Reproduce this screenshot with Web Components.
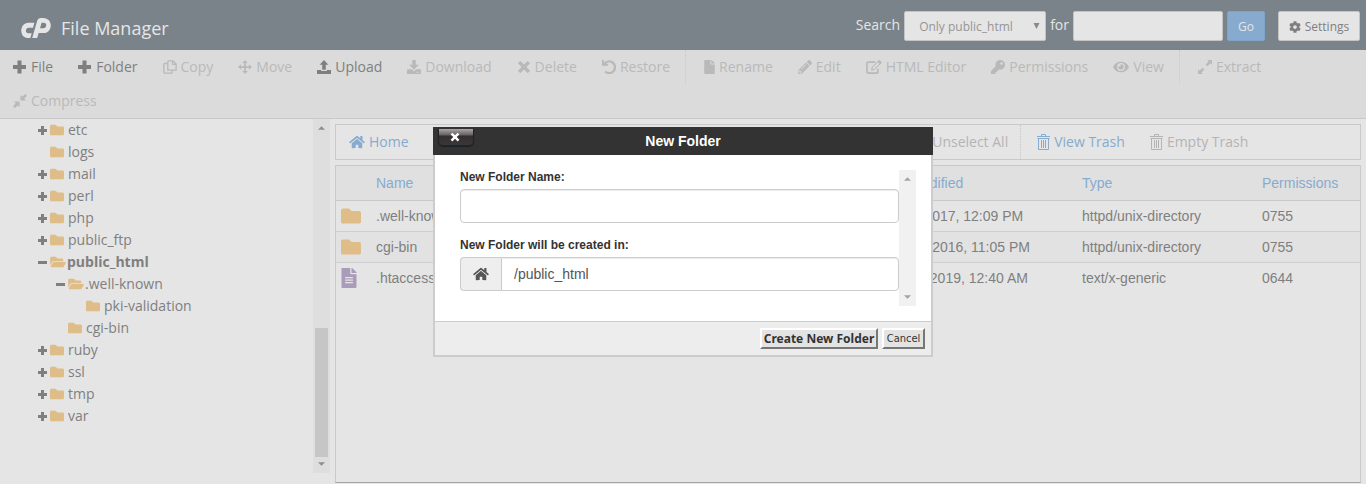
<!DOCTYPE html>
<html lang="en">
<head>
<meta charset="utf-8">
<meta name="viewport" content="width=device-width, initial-scale=1">
<title>File Manager</title>
<style>
  :root {
    --page: #e5e5e5;
    --header: #7b838a;
    --bar: #dbdbdb;
    --line: #c9c9c9;
    --text: #7f7f7f;
    --muted: #b9b9b9;
    --link: #87abcd;
    --folder: #dfbd88;
    --ui: "Open Sans", "Noto Sans", sans-serif;
    --arial: "Liberation Sans", Arial, sans-serif;
  }
  html, body { margin: 0; }
  body { background: var(--page); color: var(--text); font: 14px/20px var(--ui); }
</style>
</head>
<body>
<fm-app></fm-app>

<script>
const ICONS = {
  plus: ['0 0 14 14', '<path d="M4.500 0.500h4V5h4.500v4H8.500v4.500h-4V9H0V5h4.500z"/>'],
  copy: ['0 0 16 16', '<path fill="none" stroke="currentColor" stroke-width="1.500" d="M7.500 1h4L15 4.500V11.500H5.500V2a1 1 0 0 1 1-1zM11 1v4h4M4.500 4H2a1 1 0 0 0-1 1v9a1 1 0 0 0 1 1h7.500a1 1 0 0 0 1-1v-2"/>'],
  move: ['0 0 16 16', '<path d="M8 0l3.200 3.500H9v3.500h3.500V4.800L16 8l-3.500 3.200V9H9v3.500h2.200L8 16l-3.200-3.500H7V9H3.500v2.200L0 8l3.500-3.200V7H7V3.500H4.800z"/>'],
  upload: ['0 0 16 16', '<path d="M8 0l5 5.500H10V11H6V5.500H3zM0 11.500h4.800v1h6.400v-1H16V16H0z"/>'],
  download: ['0 0 16 16', '<path fill-rule="evenodd" d="M6 0h4v5.500h3.500L8 11 2.500 5.500H6zM1 10.500h4.500L8 13l2.500-2.500H15q1 0 1 1V15q0 1-1 1H1q-1 0-1-1v-3.500q0-1 1-1zm9.500 3v1h1.200v-1zm2.300 0v1H14v-1z"/>'],
  times: ['0 0 16 16', '<path d="M3.800 1L8 5.200 12.200 1 15 3.800 10.800 8l4.200 4.200-2.800 2.800L8 10.800 3.800 15 1 12.200 5.200 8 1 3.800z"/>'],
  undo: ['0 0 16 16', '<path d="M0 0h2.200v3A8 8 0 1 1 2.600 14l1.600-1.700A5.500 5.500 0 1 0 4.200 4.400H7v2.200H0z"/>'],
  file: ['0 0 384 512', '<path d="M224 136V0H24C10.700 0 0 10.700 0 24v464c0 13.300 10.700 24 24 24h336c13.300 0 24-10.700 24-24V160H248c-13.200 0-24-10.800-24-24zm160-14.100v6.100H256V0h6.100c6.400 0 12.500 2.500 17 7l97.900 98c4.500 4.500 7 10.600 7 16.900z"/>'],
  fileText: ['0 0 384 512', '<path d="M224 136V0H24C10.700 0 0 10.700 0 24v464c0 13.300 10.700 24 24 24h336c13.300 0 24-10.700 24-24V160H248c-13.200 0-24-10.800-24-24zm160-14.100v6.100H256V0h6.100c6.400 0 12.500 2.500 17 7l97.900 98c4.500 4.500 7 10.600 7 16.900z"/><path fill="#e5e5e5" d="M92 230h200v34H92zM92 294h200v34H92zM92 358h200v34H92z"/>'],
  pencil: ['0 0 512 512', '<path d="M497.900 142.100l-46.100 46.100c-4.700 4.700-12.300 4.700-17 0l-111-111c-4.700-4.700-4.700-12.300 0-17l46.100-46.100c18.700-18.700 49.100-18.700 67.900 0l60.100 60.100c18.800 18.700 18.800 49.100 0 67.900zM284.200 99.800L21.600 362.400.4 483.900c-2.900 16.400 11.400 30.600 27.800 27.800l121.500-21.300 262.600-262.600c4.700-4.700 4.700-12.300 0-17l-111-111c-4.800-4.700-12.400-4.700-17.100 0zM124.100 339.900c-5.500-5.500-5.500-14.300 0-19.800l154-154c5.500-5.500 14.300-5.500 19.800 0s5.500 14.300 0 19.800l-154 154c-5.500 5.500-14.300 5.500-19.800 0zM88 424h48v36.300l-64.500 11.300-31.100-31.100L51.700 376H88v48z"/>'],
  edit: ['0 0 18 16', '<path fill="none" stroke="currentColor" stroke-width="1.900" d="M10.500 2.500H2.200a1.200 1.200 0 0 0-1.200 1.200v10A1.200 1.200 0 0 0 2.200 15h10a1.200 1.200 0 0 0 1.200-1.200V10"/><path fill-rule="evenodd" d="M14.200.4q.7-.6 1.400 0l1.900 1.900q.6.700 0 1.400L9.500 11.500l-3.800.8.5-3.800zm-.7 2.300L7.600 8.500l-.3 2 2-.2 5.900-5.900z"/>'],
  key: ['0 0 512 512', '<path d="M512 176.001C512 273.203 433.202 352 336 352c-11.220 0-22.190-1.062-32.827-3.069l-24.012 27.014A23.999 23.999 0 0 1 261.223 384H224v40c0 13.255-10.745 24-24 24h-40v40c0 13.255-10.745 24-24 24H24c-13.255 0-24-10.745-24-24v-78.059c0-6.365 2.529-12.470 7.029-16.971l161.802-161.802C163.108 213.814 160 195.271 160 176 160 78.798 238.797.001 335.999 0 433.488-.001 512 78.511 512 176.001zM336 128c0 26.510 21.490 48 48 48s48-21.490 48-48-21.490-48-48-48-48 21.490-48 48z"/>'],
  eye: ['0 0 576 512', '<path d="M572.520 241.400C518.290 135.590 410.930 64 288 64S57.680 135.640 3.480 241.410a32.350 32.350 0 0 0 0 29.190C57.710 376.410 165.070 448 288 448s230.320-71.640 284.520-177.410a32.350 32.350 0 0 0 0-29.190zM288 400a144 144 0 1 1 144-144 143.930 143.930 0 0 1-144 144zm0-240a95.310 95.310 0 0 0-25.310 3.790 47.850 47.850 0 0 1-66.900 66.900A95.780 95.780 0 1 0 288 160z"/>'],
  expand: ['0 0 16 16', '<path d="M10.500 0H16v5.500l-1.800-1.800-3.500 3.500-2-2 3.500-3.500zM0 10.500l1.800 1.800 3.500-3.500 2 2-3.500 3.500L5.500 16H0z"/>'],
  compress: ['0 0 16 16', '<path d="M8.500 1l2 2L14 0l2 2-3.200 3.300 2.200 2.200H8.500zM1 8.500h6.500V15l-2-2L2 16l-2-2 3.200-3.300z"/>'],
  home: ['0 0 576 512', '<path d="M280.370 148.260L96 300.110V464a16 16 0 0 0 16 16l112.060-.29a16 16 0 0 0 15.920-16V368a16 16 0 0 1 16-16h64a16 16 0 0 1 16 16v95.640a16 16 0 0 0 16 16.050L464 480a16 16 0 0 0 16-16V300L295.670 148.260a12.190 12.190 0 0 0-15.300 0zM571.600 251.470L488 182.560V44.050a12 12 0 0 0-12-12h-56a12 12 0 0 0-12 12v72.610L318.470 43a48 48 0 0 0-61 0L4.340 251.470a12 12 0 0 0-1.600 16.900l25.500 31A12 12 0 0 0 45.150 301l235.220-193.740a12.190 12.190 0 0 1 15.300 0L530.900 301a12 12 0 0 0 16.900-1.600l25.500-31a12 12 0 0 0-1.700-16.930z"/>'],
  folder: ['0 0 512 512', '<path d="M464 128H272l-64-64H48C21.490 64 0 85.490 0 112v288c0 26.510 21.490 48 48 48h416c26.510 0 48-21.490 48-48V176c0-26.510-21.490-48-48-48z"/>'],
  folderOpen: ['0 0 576 512', '<path d="M572.694 292.093L500.270 416.248A63.997 63.997 0 0 1 444.989 448H45.025c-18.523 0-30.064-20.093-20.731-36.093l72.424-124.155A64 64 0 0 1 152 256h399.964c18.523 0 30.064 20.093 20.730 36.093zM152 224h328v-48c0-26.510-21.490-48-48-48H272l-64-64H48C21.490 64 0 85.490 0 112v278.046l69.077-118.418C86.214 242.250 117.989 224 152 224z"/>'],
  cog: ['0 0 512 512', '<path d="M487.400 315.700l-42.600-24.600c4.300-23.200 4.300-47 0-70.200l42.600-24.600c4.900-2.800 7.100-8.600 5.500-14-11.100-35.600-30-67.800-54.700-94.600-3.800-4.100-10-5.100-14.800-2.300L380.800 110c-17.900-15.400-38.500-27.300-60.800-35.100V25.800c0-5.600-3.900-10.500-9.400-11.700-36.700-8.200-74.300-7.800-109.200 0-5.500 1.200-9.400 6.100-9.400 11.700V75c-22.200 7.900-42.800 19.800-60.800 35.100L88.700 85.500c-4.900-2.800-11-1.900-14.800 2.300-24.700 26.700-43.600 58.900-54.700 94.600-1.700 5.400.6 11.200 5.500 14L67.300 221c-4.300 23.200-4.300 47 0 70.200l-42.600 24.600c-4.900 2.800-7.100 8.600-5.500 14 11.100 35.600 30 67.800 54.700 94.600 3.800 4.100 10 5.100 14.800 2.300l42.600-24.600c17.900 15.400 38.500 27.300 60.800 35.100v49.200c0 5.600 3.900 10.500 9.400 11.700 36.700 8.200 74.300 7.800 109.200 0 5.500-1.200 9.400-6.100 9.400-11.700v-49.200c22.200-7.900 42.800-19.800 60.800-35.100l42.600 24.600c4.900 2.800 11 1.900 14.800-2.300 24.700-26.700 43.600-58.900 54.700-94.600 1.500-5.500-.7-11.300-5.600-14.100zM256 336c-44.100 0-80-35.900-80-80s35.900-80 80-80 80 35.900 80 80-35.900 80-80 80z"/>'],
  trash: ['0 0 13 16', '<path fill="none" stroke="currentColor" d="M0 2.500h13M4.500 2V.5h4V2M.5 4.500h12M1.500 5v10.500h10V5M4.500 6v8M6.500 6v8M8.500 6v8"/>'],
  logo: ['0 0 30 20', '<path d="M13.400 4.800H7.600C-1.800 5-2.200 19.800 6.600 20H9.300L10.700 15.200H7.200C4 15.200 4.200 9.700 7.600 9.700H12zM17 0H22.200C32.600.2 31.800 14.900 22.600 15H16.800L18.100 10.300H22.400C26 10.300 26.200 4.800 22.800 4.800H20.600L16.200 20H11.200L16 3.500Q16.700.2 20 0z"/>'],
  caret: ['0 0 8 4', '<path d="M4 4L0 0h8z"/>'],
  caretUp: ['0 0 8 4', '<path d="M4 0l4 4H0z"/>'],
  caretBig: ['0 0 7 7', '<path d="M0 0h7L3.500 7z"/>']
};

class Base extends HTMLElement {
  connectedCallback() {
    if (this.shadowRoot) return;
    const t = document.createElement('template');
    t.innerHTML = `<style>*{box-sizing:border-box}${this.constructor.css}</style>${this.render()}`;
    this.attachShadow({ mode: 'open' }).append(t.content.cloneNode(true));
  }
}

customElements.define('fm-icon', class extends Base {
  static css = `
    :host { display: inline-flex; flex: none; width: 14px; height: 14px; }
    svg { width: 100%; height: 100%; display: block; fill: currentColor; }`;
  render() {
    const [box, body] = ICONS[this.getAttribute('name')];
    return `<svg viewBox="${box}" aria-hidden="true">${body}</svg>`;
  }
});

/* Toolbar entry: icon plus slotted caption */
customElements.define('fm-tool', class extends Base {
  static css = `
    :host { display: block; color: var(--text); }
    :host([link]) { color: var(--link); }
    :host([off]) { color: var(--muted); }
    :host([divider]) { border-left: 1px dotted var(--line); padding-left: var(--divider-pad, 5px); margin-left: var(--divider-gap, 3px); }
    button { display: flex; align-items: center; gap: 4px; height: 34px; padding: 0 12px 0 13px;
      border: 0; background: none; color: inherit; font: 14px/20px var(--ui); white-space: nowrap; }
    fm-icon { width: var(--w, 14px); }
    fm-icon[name=trash] { height: 16px; }`;
  render() {
    const w = this.getAttribute('w') || 14;
    return `<button type="button" ${this.hasAttribute('off') ? 'disabled' : ''}>
      <fm-icon name="${this.getAttribute('icon')}" style="--w:${w}px"></fm-icon><slot></slot></button>`;
  }
});

customElements.define('fm-scrollbar', class extends Base {
  static css = `
    :host { display: flex; flex-direction: column; align-items: center; justify-content: space-between;
      width: 17px; padding: 7px 2px; background: var(--track, #dedede); color: var(--arrow, #8f8f8f); }
    fm-icon { width: 7px; height: 4px; }
    .thumb { display: none; width: 13px; height: 129px; background: #c6c6c6; margin: auto 0 5px; }
    :host([thumb]) .thumb { display: block; }`;
  render() {
    return `<fm-icon name="caretUp"></fm-icon><div class="thumb"></div><fm-icon name="caret"></fm-icon>`;
  }
});

customElements.define('fm-header', class extends Base {
  static css = `
    :host { display: flex; align-items: center; min-height: 50px; padding: 0 6px 0 21px;
      background: var(--header); color: #e5e5e5; }
    .brand { display: flex; align-items: center; gap: 10px; font: 18px/24px var(--ui); padding-top: 6px; }
    .brand fm-icon { width: 30px; height: 20px; }
    h1 { font: inherit; margin: 0; }
    form { display: flex; align-items: center; gap: 4px; margin-left: auto; padding-top: 2px; }
    label { padding-bottom: 2px; }
    select, input, button { height: 30px; font: 12px/18px var(--ui); border: 1px solid #c4c4c4; border-radius: 2px;
      background: #e5e5e5; color: #959595; margin: 0; }
    .pick { position: relative; display: flex; }
    select { width: 142px; appearance: none; padding: 1px 14px 0; }
    .pick fm-icon { position: absolute; right: 6px; top: 12px; width: 7px; height: 6px; color: #8a8a8a; }
    input { width: 150px; }
    button { display: flex; align-items: center; justify-content: center; gap: 4px; padding: 1px 0 0; }
    .go { width: 38px; background: #87abcf; border-color: #7ea4ca; color: #e5e5e5; }
    .settings { width: 82px; margin-left: 9px; color: var(--text); }
    .settings fm-icon { width: 12px; height: 12px; }`;
  render() {
    return `
      <div class="brand"><fm-icon name="logo"></fm-icon><h1>File Manager</h1></div>
      <form onsubmit="return false">
        <label for="scope">Search</label>
        <span class="pick"><select id="scope"><option>Only public_html</option><option>All Your Files</option></select><fm-icon name="caretBig"></fm-icon></span>
        <label for="term">for</label>
        <input id="term" type="text">
        <button class="go" type="submit">Go</button>
        <button class="settings" type="button"><fm-icon name="cog"></fm-icon>Settings</button>
      </form>`;
  }
});

customElements.define('fm-toolbar', class extends Base {
  static css = `
    :host { display: flex; flex-wrap: wrap; background: var(--bar); border-bottom: 1px solid var(--line); }`;
  render() { return '<slot></slot>'; }
});

/* One folder in the tree; state is "closed", "open" or absent for a leaf */
customElements.define('fm-node', class extends Base {
  static css = `
    :host { display: block; }
    .row { display: flex; align-items: center; height: 22px; }
    .mark { position: relative; width: 12px; height: 9px; flex: none; }
    .mark.open::before, .mark.closed::before { content: ""; display: block; width: 9px; height: 3px; margin-top: 3px; background: var(--text); }
    .mark.closed::after { content: ""; position: absolute; left: 3px; top: 0; width: 3px; height: 9px; background: var(--text); }
    fm-icon { color: var(--folder); margin-right: 4px; }
    fm-icon[name=folderOpen] { width: 16px; margin-right: 1px; }
    a { color: inherit; text-decoration: none; }
    :host([current]) > .row a { font-weight: 700; }
    .kids { padding-left: 18px; }`;
  render() {
    const s = this.getAttribute('state') || '';
    return `<div class="row"><span class="mark ${s}"></span><fm-icon name="${s === 'open' ? 'folderOpen' : 'folder'}"></fm-icon><a href="#">${this.getAttribute('name')}</a></div>
      <div class="kids"><slot></slot></div>`;
  }
});

customElements.define('fm-tree', class extends Base {
  static css = `
    :host { display: flex; justify-content: space-between; }
    .list { padding-left: 38px; min-width: 0; }`;
  render() { return '<div class="list"><slot></slot></div><fm-scrollbar thumb></fm-scrollbar>'; }
});

customElements.define('fm-files', class extends Base {
  static css = `
    :host { display: block; border: 1px solid var(--line); border-bottom-color: #a6a6a6; font: 14px/20px var(--arial); }
    table { width: 100%; border-collapse: collapse; table-layout: fixed; }
    th, td { padding: 0 8px; text-align: left; font-weight: 400; white-space: nowrap; height: 31px; border-bottom: 1px solid #cfcfcf; }
    th { height: 34px; background: #e0e0e0; color: var(--link); border-color: var(--line); }
    tbody tr:nth-child(even) { background: #e2e2e2; }
    tbody tr:last-child td { border-bottom: 0; }
    td:first-child { padding: 0 5px; }
    fm-icon { display: flex; width: 20px; height: 20px; color: var(--folder); }
    fm-icon[name=fileText] { width: 16px; color: #a99bb9; }
    .c0 { width: 32px } .c2 { width: 180px } .c3 { width: 202px } .c4 { width: 180px } .c5 { width: 106px }`;
  render() {
    const rows = [
      ['folder', '.well-known', '4 KB', 'Dec 4, 2017, 12:09 PM', 'httpd/unix-directory', '0755'],
      ['folder', 'cgi-bin', '4 KB', 'Dec 13, 2016, 11:05 PM', 'httpd/unix-directory', '0755'],
      ['fileText', '.htaccess', '1.2 KB', 'Jan 17, 2019, 12:40 AM', 'text/x-generic', '0644']
    ];
    return `<table>
      <colgroup><col class="c0"><col><col class="c2"><col class="c3"><col class="c4"><col class="c5"></colgroup>
      <thead><tr><th></th><th>Name</th><th>Size</th><th>Last Modified</th><th>Type</th><th>Permissions</th></tr></thead>
      <tbody>${rows.map(([i, ...c]) => `<tr><td><fm-icon name="${i}"></fm-icon></td>${c.map(x => `<td>${x}</td>`).join('')}</tr>`).join('')}</tbody>
    </table>`;
  }
});

customElements.define('fm-dialog', class extends Base {
  static css = `
    :host { position: fixed; inset: 0; display: grid; place-items: center; font: 14px/20px var(--arial); }
    .box { width: 500px; max-width: 100%; background: #fff; border: 2px solid #ccc; border-top: 0; }
    header { position: relative; margin: 0 -2px; padding: 4px 0; background: #333; color: #fff; text-align: center; }
    h2 { margin: 0; font: 700 14px/20px var(--arial); }
    .close { position: absolute; left: 5px; top: 2px; width: 36px; height: 17px; padding: 0 2px 0 0; border: 1px solid #222;
      border-top: 0; border-radius: 0 0 5px 5px; color: #fff; display: grid; place-items: center;
      background: linear-gradient(#aaa5a8, #6a6467 35%, #332e30 45%, #3c3638);
      box-shadow: 0 1px 1px #15252b; }
    .close fm-icon { width: 10px; height: 10px; }
    .body { display: flex; padding: 15px; }
    .fields { flex: 1; padding: 0 0 0 10px; display: flex; flex-direction: column; }
    .field + .field { margin-top: 15px; }
    label { display: block; font: 700 12px/14px var(--arial); color: #333; margin-bottom: 5px; }
    .control { display: flex; }
    input { flex: 1; min-width: 0; height: 34px; border: 1px solid #ccc; border-radius: 4px; padding: 0 12px; margin: 0;
      font: 14px/20px var(--arial); color: #555; background: #fff; box-shadow: inset 0 1px 1px rgba(0,0,0,.08); }
    .addon { width: 41px; display: grid; place-items: center; background: #eee; border: 1px solid #ccc; border-right: 0;
      border-radius: 4px 0 0 4px; color: #555; }
    .addon fm-icon { width: 16px; }
    .addon + input { border-radius: 0 4px 4px 0; }
    fm-scrollbar { --track: #f1f1f1; --arrow: #a3a3a3; height: 136px; }
    footer { display: flex; justify-content: flex-end; gap: 4px; padding: 6px; height: 34px; background: #ededed; border-top: 1px solid #ccc; }
    footer button { height: 21px; min-width: 43px; margin: 0; padding: 0; border: 2px solid; border-color: #fff #777 #777 #fff; background: #e3e3e3;
      color: #333; font: 11px/14px "DejaVu Sans Condensed", "DejaVu Sans", sans-serif; }
    footer .main { min-width: 118px; font: 700 12px/14px "Noto Sans", sans-serif; }`;
  render() {
    return `<section class="box" role="dialog" aria-labelledby="t">
      <header><button class="close" type="button" aria-label="Close"><fm-icon name="times"></fm-icon></button><h2 id="t">New Folder</h2></header>
      <div class="body">
        <div class="fields">
          <div class="field"><label for="name">New Folder Name:</label><div class="control"><input id="name" type="text"></div></div>
          <div class="field"><label for="path">New Folder will be created in:</label>
            <div class="control"><span class="addon"><fm-icon name="home"></fm-icon></span><input id="path" type="text" value="/public_html"></div></div>
        </div>
        <fm-scrollbar></fm-scrollbar>
      </div>
      <footer><button class="main" type="button">Create New Folder</button><button type="button">Cancel</button></footer>
    </section>`;
  }
});

customElements.define('fm-app', class extends Base {
  static css = `
    :host { display: flex; flex-direction: column; min-height: 100vh; }
    main { flex: 1; display: grid; grid-template-columns: 330px minmax(0, 1fr); }
    fm-tree { margin-bottom: 11px; }
    .files { display: flex; flex-direction: column; gap: 5px; padding: 5px 5px 1px; }
    .nav { display: flex; overflow: hidden; border: 1px solid var(--line); --muted: #b4b4b4; --divider-pad: 3px; --divider-gap: 0px; }
    .places { display: flex; flex: 0 0 464px; }
    fm-files { flex: 1; }`;
  render() {
    return `
      <fm-header></fm-header>
      <fm-toolbar>
        <fm-tool icon="plus">File</fm-tool>
        <fm-tool icon="plus">Folder</fm-tool>
        <fm-tool icon="copy" off>Copy</fm-tool>
        <fm-tool icon="move" off>Move</fm-tool>
        <fm-tool icon="upload">Upload</fm-tool>
        <fm-tool icon="download" off>Download</fm-tool>
        <fm-tool icon="times" off>Delete</fm-tool>
        <fm-tool icon="undo" off>Restore</fm-tool>
        <fm-tool icon="file" w="11" divider off>Rename</fm-tool>
        <fm-tool icon="pencil" off>Edit</fm-tool>
        <fm-tool icon="edit" w="16" off>HTML Editor</fm-tool>
        <fm-tool icon="key" off>Permissions</fm-tool>
        <fm-tool icon="eye" w="16" off>View</fm-tool>
        <fm-tool icon="expand" divider off>Extract</fm-tool>
        <fm-tool icon="compress" off>Compress</fm-tool>
      </fm-toolbar>
      <main>
        <fm-tree>
          <fm-node name="etc" state="closed"></fm-node>
          <fm-node name="logs"></fm-node>
          <fm-node name="mail" state="closed"></fm-node>
          <fm-node name="perl" state="closed"></fm-node>
          <fm-node name="php" state="closed"></fm-node>
          <fm-node name="public_ftp" state="closed"></fm-node>
          <fm-node name="public_html" state="open" current>
            <fm-node name=".well-known" state="open"><fm-node name="pki-validation"></fm-node></fm-node>
            <fm-node name="cgi-bin"></fm-node>
          </fm-node>
          <fm-node name="ruby" state="closed"></fm-node>
          <fm-node name="ssl" state="closed"></fm-node>
          <fm-node name="tmp" state="closed"></fm-node>
          <fm-node name="var" state="closed"></fm-node>
        </fm-tree>
        <div class="files">
          <div class="nav">
            <div class="places">
              <fm-tool icon="home" w="16" link>Home</fm-tool>
              <fm-tool icon="upload" link>Up One Level</fm-tool>
              <fm-tool icon="undo" off>Back</fm-tool>
            </div>
            <fm-tool icon="copy" link>Select All</fm-tool>
            <fm-tool icon="copy" off>Unselect All</fm-tool>
            <fm-tool icon="trash" w="13" divider link>View Trash</fm-tool>
            <fm-tool icon="trash" w="13" off>Empty Trash</fm-tool>
          </div>
          <fm-files></fm-files>
        </div>
      </main>
      <fm-dialog></fm-dialog>`;
  }
});
</script>
</body>
</html>
